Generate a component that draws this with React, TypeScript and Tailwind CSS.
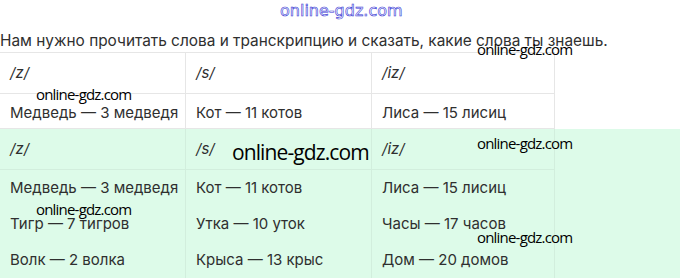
import React from "react";

const headers = ["/z/", "/s/", "/iz/"];

const firstRow = ["Медведь — 3 медведя", "Кот — 11 котов", "Лиса — 15 лисиц"];

const columns = [
  ["Медведь — 3 медведя", "Тигр — 7 тигров", "Волк — 2 волка"],
  ["Кот — 11 котов", "Утка — 10 уток", "Крыса — 13 крыс"],
  ["Лиса — 15 лисиц", "Часы — 17 часов", "Дом — 20 домов"],
];

const Mark: React.FC<{ className: string }> = ({ className }) => (
  <span
    className={`absolute whitespace-nowrap leading-none text-black ${className}`}
    style={{ fontFamily: '"Open Sans", "Noto Sans", sans-serif' }}
  >
    online-gdz.com
  </span>
);

const App: React.FC = () => {
  return (
    <div
      className="relative w-[680px] h-[278px] overflow-hidden bg-white text-[#2f2f2f]"
      style={{ fontFamily: 'Inter, "Noto Sans", sans-serif' }}
    >
      <div className="h-[30px]" />
      <p className="h-[22px] text-[15.4px] leading-[22px] whitespace-nowrap">
        Нам нужно прочитать слова и транскрипцию и сказать, какие слова ты знаешь.
      </p>

      {/* Table 1 */}
      <div className="w-[555px] border-t border-r border-[#e6e6e6]">
        <div className="grid grid-cols-[186px_186px_1fr] h-[41px] border-b border-[#e6e6e6]">
          {headers.map((h, i) => (
            <div
              key={h}
              className={`flex items-center pl-[10px] italic text-[15px] ${i < 2 ? "border-r border-[#e6e6e6]" : ""}`}
            >
              {h}
            </div>
          ))}
        </div>
        <div className="grid grid-cols-[186px_186px_1fr] h-[35px] border-b border-[#e6e6e6]">
          {firstRow.map((t, i) => (
            <div
              key={t}
              className={`pl-[10px] pt-[8px] text-[15px] leading-[22px] whitespace-nowrap ${i < 2 ? "border-r border-[#e6e6e6]" : ""}`}
            >
              {t}
            </div>
          ))}
        </div>
      </div>

      {/* Table 2 (highlighted) */}
      <div className="bg-[#ddfbe9] h-[150px]">
        <div className="w-[555px] h-full border-r border-[#d2eedd]">
          <div className="grid grid-cols-[186px_186px_1fr] h-[41px] border-b border-[#d2eedd]">
            {headers.map((h, i) => (
              <div
                key={h}
                className={`flex items-center pl-[10px] italic text-[15px] ${i < 2 ? "border-r border-[#d2eedd]" : ""}`}
              >
                {h}
              </div>
            ))}
          </div>
          <div className="grid grid-cols-[186px_186px_1fr] h-[109px]">
            {columns.map((col, i) => (
              <div
                key={i}
                className={`pl-[10px] text-[15px] leading-[36px] whitespace-nowrap ${i < 2 ? "border-r border-[#d2eedd]" : ""}`}
              >
                {col.map((t) => (
                  <div key={t}>{t}</div>
                ))}
              </div>
            ))}
          </div>
        </div>
      </div>

      {/* watermarks */}
      <span
        className="absolute left-[280px] top-[3px] text-[16px] leading-none whitespace-nowrap text-white [-webkit-text-stroke:0.6px_#3434d4]"
        style={{ fontFamily: '"DejaVu Sans", sans-serif' }}
      >
        online-gdz.com
      </span>
      <Mark className="left-[477px] top-[42px] text-[15px] tracking-[-0.8px]" />
      <Mark className="left-[36px] top-[87px] text-[15px] tracking-[-0.8px]" />
      <Mark className="left-[232px] top-[142px] text-[21px] tracking-[-0.9px]" />
      <Mark className="left-[477px] top-[136px] text-[15px] tracking-[-0.8px]" />
      <Mark className="left-[36px] top-[202px] text-[15px] tracking-[-0.8px]" />
      <Mark className="left-[477px] top-[230px] text-[15px] tracking-[-0.8px]" />
    </div>
  );
};

export default App;
